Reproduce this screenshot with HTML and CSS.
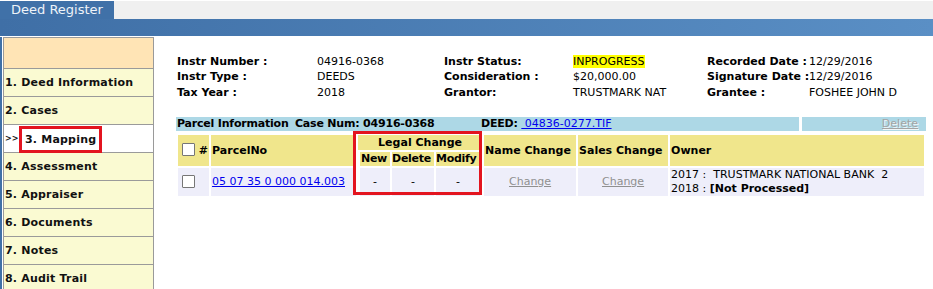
FILE: index.html
```html
<!DOCTYPE html>
<html lang="en">
<head>
    <meta charset="UTF-8">
    <title>Deed Register</title>
    <link rel="stylesheet" href="styles.css">
</head>
<body>
    <div class="topbar">
        <div class="tab">Deed Register</div>
    </div>
    <div class="bluebar"></div>

    <div class="main">
        <div class="nav">
            <div class="nav-head"></div>
            <div class="nav-item">1. Deed Information</div>
            <div class="nav-item">2. Cases</div>
            <div class="nav-item active"><span class="pointer">&gt;&gt;</span><span class="marked">3. Mapping</span></div>
            <div class="nav-item">4. Assessment</div>
            <div class="nav-item">5. Appraiser</div>
            <div class="nav-item">6. Documents</div>
            <div class="nav-item">7. Notes</div>
            <div class="nav-item">8. Audit Trail</div>
        </div>

        <div class="content">
            <div class="info">
                <div class="lbl">Instr Number :</div><div>04916-0368</div>
                <div class="lbl">Instr Status:</div><div><span class="status">INPROGRESS</span></div>
                <div class="lbl">Recorded Date :</div><div>12/29/2016</div>

                <div class="lbl">Instr Type :</div><div>DEEDS</div>
                <div class="lbl">Consideration :</div><div>$20,000.00</div>
                <div class="lbl">Signature Date :</div><div>12/29/2016</div>

                <div class="lbl">Tax Year :</div><div>2018</div>
                <div class="lbl">Grantor:</div><div>TRUSTMARK NAT</div>
                <div class="lbl">Grantee :</div><div>FOSHEE JOHN D</div>
            </div>

            <div class="parcel-bar">
                <div class="parcel-title"><span class="pt-1">Parcel Information</span><span class="pt-2">Case Num: 04916-0368</span><span>DEED: <a href="#" class="link">&nbsp;04836-0277.TIF</a></span></div>
                <div class="parcel-action"><a href="#" class="off-link">Delete</a></div>
            </div>

            <div class="grid-wrap">
                <table class="grid">
                    <thead>
                        <tr>
                            <th rowspan="2" class="c-chk"><span class="box"></span> #</th>
                            <th rowspan="2" class="c-parcel">ParcelNo</th>
                            <th colspan="3" class="c-group">Legal Change</th>
                            <th rowspan="2" class="c-name">Name Change</th>
                            <th rowspan="2" class="c-sales">Sales Change</th>
                            <th rowspan="2" class="c-owner">Owner</th>
                        </tr>
                        <tr class="sub">
                            <th class="c-new">New</th>
                            <th class="c-del">Delete</th>
                            <th class="c-mod">Modify</th>
                        </tr>
                    </thead>
                    <tbody>
                        <tr>
                            <td class="c-chk"><span class="box"></span></td>
                            <td class="c-parcel"><a href="#" class="link">05 07 35 0 000 014.003</a></td>
                            <td class="c-new center">-</td>
                            <td class="c-del center">-</td>
                            <td class="c-mod center">-</td>
                            <td class="center"><a href="#" class="dim-link">Change</a></td>
                            <td class="center"><a href="#" class="dim-link">Change</a></td>
                            <td class="owner">2017 :&nbsp; TRUSTMARK NATIONAL BANK&nbsp; 2<br>2018 : <b>[Not Processed]</b></td>
                        </tr>
                    </tbody>
                </table>
                <div class="legal-mark"></div>
            </div>
        </div>
    </div>
</body>
</html>
```

FILE: styles.css
```css
body {
    margin: 0;
    font-family: "DejaVu Sans", Verdana, sans-serif;
    font-size: 11px;
    color: #000;
    background-color: #fff;
}

.topbar {
    margin-top: 1px;
    height: 18px;
    background-color: #f0f0f0;
}

.tab {
    display: inline-block;
    width: 114px;
    height: 18px;
    line-height: 18px;
    box-sizing: border-box;
    padding-left: 11px;
    font-size: 13px;
    color: #eef3f8;
    background-color: #4071a8;
}

.bluebar {
    height: 17px;
    background: linear-gradient(to right, #3f6fa6, #5a8fc5);
}

.main {
    display: flex;
    align-items: flex-start;
    margin-top: 1px;
    border-left: 2px solid #4070a7;
    min-height: 260px;
}

/* left menu */
.nav {
    width: 151px;
    margin-left: 1px;
    border: 1px solid #9a9a9a;
    border-bottom: none;
    box-sizing: border-box;
}

.nav-head {
    height: 30px;
    background-color: #ffe4b5;
    border-bottom: 1px solid #9a9a9a;
}

.nav-item {
    height: 27px;
    line-height: 27px;
    padding-left: 1px;
    font-weight: bold;
    letter-spacing: 0.2px;
    color: #111;
    background-color: #fafad2;
    border-bottom: 1px solid #9a9a9a;
    white-space: nowrap;
}

.nav-item.active {
    background-color: #fff;
}

.pointer {
    display: inline-block;
    width: 14px;
    font-size: 8px;
    letter-spacing: 0;
    vertical-align: top;
}

.marked {
    display: inline-block;
    vertical-align: top;
    margin-top: 1px;
    line-height: 21px;
    padding: 0 3px;
    border: 3px solid #e3141f;
}

/* right side */
.content {
    flex: 1;
    margin-left: 22px;
    padding: 17px 7px 0 0;
}

.info {
    display: grid;
    grid-template-columns: 140px 127px 129px 134px 102px auto;
    grid-auto-rows: 15.4px;
    line-height: 15px;
    margin-left: 1px;
    white-space: nowrap;
}

.lbl {
    font-weight: bold;
}

.status {
    background-color: #ffff00;
}

.parcel-bar {
    display: flex;
    gap: 3px;
    margin-top: 17px;
    height: 14px;
    line-height: 14px;
}

.parcel-title {
    flex: 1;
    padding-left: 1px;
    font-weight: bold;
    letter-spacing: -0.2px;
    background-color: #add8e6;
    white-space: nowrap;
}

.pt-1 {
    display: inline-block;
    width: 118px;
}

.pt-2 {
    display: inline-block;
    width: 186px;
}

.parcel-action {
    width: 124px;
    padding-right: 8px;
    box-sizing: border-box;
    text-align: right;
    background-color: #add8e6;
}

.link {
    color: #0000ee;
    font-weight: normal;
    letter-spacing: 0;
}

.dim-link {
    color: #909090;
    font-weight: normal;
}

.off-link {
    color: #a4a4a4;
    text-shadow: 1px 1px 0 #eef6f9;
}

/* parcel table */
.grid-wrap {
    position: relative;
    margin-top: 2px;
}

.grid {
    width: 100%;
    border-collapse: separate;
    border-spacing: 2px;
}

.grid th {
    background-color: #f0e68c;
    font-weight: bold;
    text-align: left;
    padding: 0 1px;
    height: 15px;
    line-height: 14px;
    white-space: nowrap;
}

.grid .sub th {
    height: 13px;
    letter-spacing: -0.3px;
}

.grid th.c-group {
    text-align: center;
}

.grid td {
    background-color: #eeeefa;
    padding: 0 1px;
    height: 26px;
    line-height: 14px;
    white-space: nowrap;
}

.grid .center {
    text-align: center;
}

.grid .c-chk {
    width: 24px;
    padding-left: 4px;
}

.grid .c-parcel {
    width: 143px;
}

.grid .c-new {
    width: 28px;
    border-left: 2px solid #fff;
}

.grid .c-del {
    width: 42px;
    padding: 0;
}

.grid .c-mod {
    width: 44px;
    padding: 0;
    border-right: 2px solid #fff;
}

.grid .c-name {
    width: 90px;
}

.grid .c-sales {
    width: 88px;
}

.box {
    display: inline-block;
    width: 11px;
    height: 11px;
    border: 1px solid #767676;
    border-radius: 1px;
    background-color: #fff;
    vertical-align: -2px;
}

.owner {
    line-height: 13px;
}

/* highlight drawn over the legal change columns */
.legal-mark {
    position: absolute;
    left: 177px;
    top: -2px;
    width: 123px;
    height: 58px;
    border: 3px solid #e3141f;
    pointer-events: none;
}
```
